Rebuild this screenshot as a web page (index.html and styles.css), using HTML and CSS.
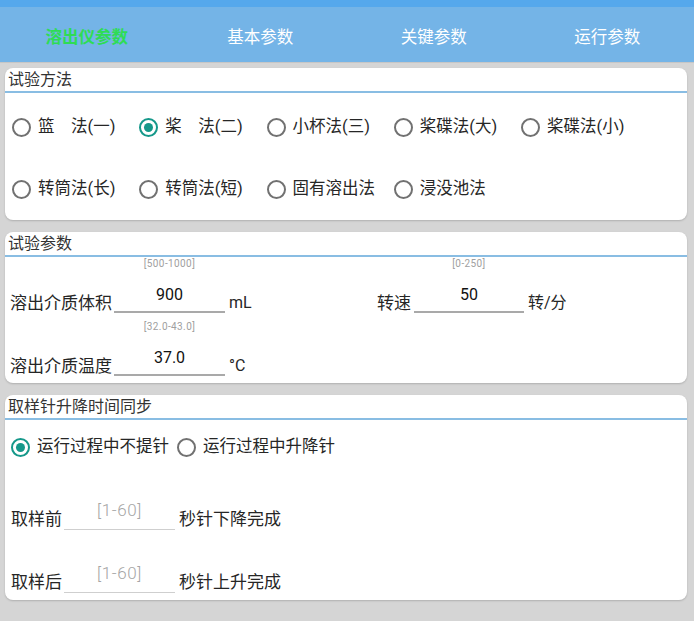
FILE: index.html
```html
<!DOCTYPE html>
<html lang="zh-CN">
<head>
<meta charset="utf-8">
<title>溶出仪参数</title>
<link rel="stylesheet" href="styles.css">
</head>
<body>
<div class="statusbar"></div>
<nav class="tabs">
  <div class="tab active">溶出仪参数</div>
  <div class="tab">基本参数</div>
  <div class="tab">关键参数</div>
  <div class="tab">运行参数</div>
</nav>
<main class="content">
  <section class="card">
    <h2 class="card-title">试验方法</h2>
    <div class="method-grid">
      <div class="radio"><span class="circle"></span><span class="rlabel">篮　法(一)</span></div>
      <div class="radio"><span class="circle checked"></span><span class="rlabel">桨　法(二)</span></div>
      <div class="radio"><span class="circle"></span><span class="rlabel">小杯法(三)</span></div>
      <div class="radio"><span class="circle"></span><span class="rlabel">桨碟法(大)</span></div>
      <div class="radio"><span class="circle"></span><span class="rlabel">桨碟法(小)</span></div>
      <div class="radio"><span class="circle"></span><span class="rlabel">转筒法(长)</span></div>
      <div class="radio"><span class="circle"></span><span class="rlabel">转筒法(短)</span></div>
      <div class="radio"><span class="circle"></span><span class="rlabel">固有溶出法</span></div>
      <div class="radio"><span class="circle"></span><span class="rlabel">浸没池法</span></div>
    </div>
  </section>

  <section class="card">
    <h2 class="card-title">试验参数</h2>
    <div class="params">
      <div class="param-row">
        <div class="field">
          <span class="flabel">溶出介质体积</span>
          <div class="finput">
            <span class="hint">[500-1000]</span>
            <span class="value">900</span>
          </div>
          <span class="unit">mL</span>
        </div>
        <div class="field">
          <span class="flabel">转速</span>
          <div class="finput narrow">
            <span class="hint">[0-250]</span>
            <span class="value">50</span>
          </div>
          <span class="unit">转/分</span>
        </div>
      </div>
      <div class="param-row">
        <div class="field">
          <span class="flabel">溶出介质温度</span>
          <div class="finput">
            <span class="hint">[32.0-43.0]</span>
            <span class="value">37.0</span>
          </div>
          <span class="unit">°C</span>
        </div>
      </div>
    </div>
  </section>

  <section class="card">
    <h2 class="card-title">取样针升降时间同步</h2>
    <div class="sync">
      <div class="sync-radios">
        <div class="radio"><span class="circle checked"></span><span class="rlabel">运行过程中不提针</span></div>
        <div class="radio"><span class="circle"></span><span class="rlabel">运行过程中升降针</span></div>
      </div>
      <div class="sync-row">
        <span class="flabel">取样前</span>
        <div class="sinput"><span class="placeholder">[1-60]</span></div>
        <span class="unit">秒针下降完成</span>
      </div>
      <div class="sync-row">
        <span class="flabel">取样后</span>
        <div class="sinput"><span class="placeholder">[1-60]</span></div>
        <span class="unit">秒针上升完成</span>
      </div>
    </div>
  </section>
</main>
</body>
</html>
```

FILE: styles.css
```css
html, body {
  margin: 0;
  padding: 0;
}
body {
  background: #d5d5d5;
  font-family: Roboto, "Noto Sans CJK SC", sans-serif;
  color: #222;
  width: 694px;
  height: 621px;
  overflow: hidden;
}
.statusbar {
  height: 7px;
  background: #55a8ec;
}
.tabs {
  display: grid;
  grid-template-columns: repeat(4, 1fr);
  height: 55px;
  background: #74b4e7;
  border-bottom: 1px solid #c6c6c6;
}
.tab {
  display: flex;
  align-items: center;
  justify-content: center;
  padding-top: 3px;
  font-size: 16.5px;
  color: #ffffff;
}
.tab.active {
  color: #2edc55;
  font-weight: bold;
}
.content {
  display: flex;
  flex-direction: column;
  gap: 12px;
  padding: 5px 7px 0 5px;
}
.card {
  background: #fff;
  border-radius: 8px;
  box-shadow: 0 1px 2px rgba(0, 0, 0, 0.18);
  overflow: hidden;
}
.card-title {
  margin: 0;
  height: 23px;
  line-height: 24px;
  padding-left: 3px;
  font-size: 16px;
  font-weight: normal;
  color: #333;
  border-bottom: 2px solid #89bde3;
}
.method-grid {
  display: grid;
  grid-template-columns: repeat(5, 127.25px);
  grid-auto-rows: 62px;
  align-items: center;
  padding: 3px 0 0 7px;
}
.radio {
  display: flex;
  align-items: center;
  gap: 7px;
}
.circle {
  box-sizing: border-box;
  width: 19px;
  height: 19px;
  border: 2px solid #717171;
  border-radius: 50%;
  display: flex;
  align-items: center;
  justify-content: center;
  flex: none;
}
.circle.checked {
  border-color: #15988a;
}
.circle.checked::after {
  content: "";
  width: 9px;
  height: 9px;
  border-radius: 50%;
  background: #15988a;
}
.rlabel {
  font-size: 16.5px;
  line-height: 30px;
  color: #262626;
}
.params {
  display: flex;
  flex-direction: column;
  gap: 8px;
  padding: 1px 0 7px 5px;
}
.param-row {
  display: grid;
  grid-template-columns: 367px auto;
}
.field {
  display: flex;
  align-items: flex-end;
}
.flabel {
  font-size: 17px;
  line-height: 20px;
  color: #262626;
  white-space: nowrap;
}
.finput {
  display: flex;
  flex-direction: column;
  width: 111px;
  margin: 0 4px 0 2px;
  text-align: center;
}
.finput.narrow {
  width: 110px;
  margin-left: 3px;
}
.hint {
  font-size: 10px;
  line-height: 12px;
  letter-spacing: 0.4px;
  color: #a0a0a0;
}
.value {
  font-size: 16px;
  line-height: 30px;
  padding: 10px 0 1px;
  color: #111;
  border-bottom: 2px solid #a9a9a9;
}
.unit {
  font-size: 16px;
  line-height: 20px;
  color: #262626;
  white-space: nowrap;
}
.sync {
  display: flex;
  flex-direction: column;
  padding: 12px 0 7px 6px;
}
.sync-radios {
  display: flex;
  gap: 8px;
  margin-bottom: 33px;
}
.sync-row {
  display: flex;
  align-items: flex-end;
  height: 35px;
}
.sync-row + .sync-row {
  margin-top: 28px;
}
.sync-row .flabel {
  padding-bottom: 1px;
}
.sync-row .unit {
  font-size: 17px;
  padding-bottom: 1px;
}
.sinput {
  width: 111px;
  margin: 0 4px 0 2px;
  text-align: center;
  border-bottom: 1px solid #cfcfcf;
  padding-bottom: 4px;
}
.placeholder {
  display: block;
  font-size: 17px;
  font-weight: 300;
  letter-spacing: 0.6px;
  line-height: 30px;
  color: #a6a6a6;
}
```
